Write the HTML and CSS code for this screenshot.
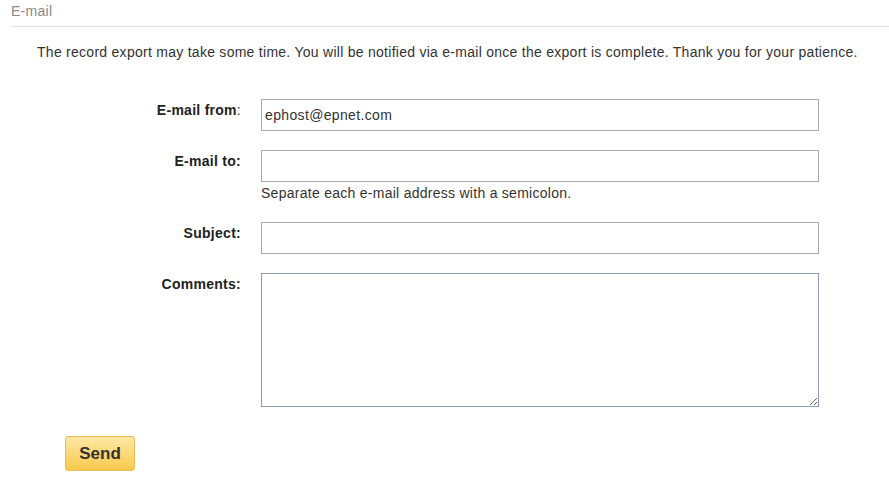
FILE: index.html
```html
<!DOCTYPE html>
<html lang="en">
<head>
  <meta charset="UTF-8">
  <meta name="viewport" content="width=device-width, initial-scale=1.0">
  <title>E-mail</title>
  <link rel="stylesheet" href="styles.css">
</head>
<body>
  <h2 class="title">E-mail</h2>
  <p class="intro">The record export may take some time. You will be notified via e-mail once the export is complete. Thank you for your patience.</p>

  <form class="mail-form" id="mailForm">
    <div class="row">
      <label for="from"><b>E-mail from</b>:</label>
      <div class="field">
        <input type="text" id="from" value="ephost@epnet.com">
      </div>
    </div>
    <div class="row">
      <label for="to"><b>E-mail to:</b></label>
      <div class="field">
        <input type="text" id="to">
        <div class="hint">Separate each e-mail address with a semicolon.</div>
      </div>
    </div>
    <div class="row">
      <label for="subject"><b>Subject:</b></label>
      <div class="field">
        <input type="text" id="subject">
      </div>
    </div>
    <div class="row">
      <label for="comments"><b>Comments:</b></label>
      <div class="field">
        <textarea id="comments"></textarea>
      </div>
    </div>
    <button type="button" class="send">Send</button>
  </form>
</body>
</html>
```

FILE: styles.css
```css
body {
  font-family: "Liberation Sans", Arial, sans-serif;
  font-size: 14px;
  letter-spacing: 0.27px;
  color: #333;
  margin: 0;
  padding: 0;
  background: white;
}

.title {
  margin: 0 0 0 11px;
  padding: 0 0 4px 0;
  font-size: 14px;
  font-weight: normal;
  line-height: 22px;
  color: #888;
  border-bottom: 1px solid #e4e4e4;
}

.intro {
  margin: 17px 0 0 37px;
  line-height: 16px;
}

.mail-form {
  margin-top: 39px;
}

.row {
  display: grid;
  grid-template-columns: 241px 558px;
  column-gap: 20px;
  margin-bottom: 19px;
}

.row label {
  text-align: right;
  padding-top: 3px;
  line-height: 16px;
  color: #333;
}

.row b {
  color: #222;
}

.field input,
.field textarea {
  display: block;
  box-sizing: border-box;
  width: 558px;
  margin: 0;
  border: 1px solid #aaa;
  font-family: "Liberation Sans", Arial, sans-serif;
  font-size: 14px;
  letter-spacing: 0.35px;
  color: #333;
  background: white;
}

.field input {
  height: 32px;
  padding: 0 3px;
}

.field textarea {
  height: 134px;
  padding: 4px;
  border-color: #8aa0b2;
}

.hint {
  margin-top: 3px;
  line-height: 16px;
  margin-bottom: 2px;
}

.send {
  margin: 10px 0 0 65px;
  width: 70px;
  height: 35px;
  border: 1px solid #e7bd55;
  border-radius: 3px;
  background: linear-gradient(#fee8a4, #f9c94c);
  font-family: "Liberation Sans", Arial, sans-serif;
  font-size: 17px;
  font-weight: bold;
  letter-spacing: 0;
  color: #333;
  cursor: pointer;
}
```
